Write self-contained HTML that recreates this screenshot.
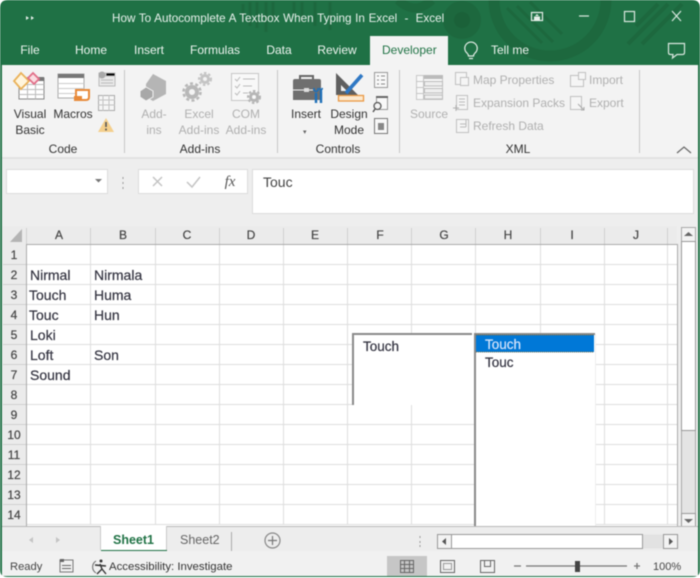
<!DOCTYPE html>
<html><head><meta charset="utf-8"><style>
html,body{margin:0;padding:0;background:#fff}
#w{position:relative;width:700px;height:578px;overflow:hidden;font-family:"Liberation Sans",sans-serif;filter:blur(.5px)}
.t{position:absolute;white-space:nowrap;line-height:16px}
.r{font-size:12px;color:#333}
.c{font-size:12px;color:#333;text-align:center;transform:translateX(-50%)}
.d{font-size:12px;color:#b0b0b0}
.g{font-size:12px;color:#333;transform:translateX(-50%)}
.m{font-size:12px;color:#eef5f0;transform:translateX(-50%)}
.cell{font-size:14px;color:#333340;-webkit-text-stroke:.2px #333340}
.hd{font-size:12px;color:#444;transform:translateX(-50%);-webkit-text-stroke:.2px #444}
svg{position:absolute;left:0;top:0}
</style></head><body><div id="w">
<svg width="700" height="578" viewBox="0 0 700 578">
<!-- window -->
<path d="M8 0H692Q700 0 700 8V570Q700 577 692 577H8Q0 577 0 570V8Q0 0 8 0Z" fill="#1f7145"/>
<!-- title decoration -->
<g fill="none" stroke="#1b6139" stroke-opacity=".55">
<path d="M243 4V22M250 2V26M257 2V28M266 2V32M273 2V20M294 2V14M302 2V22M315 2V26M330 2V30" stroke-width="3"/>
<circle cx="462" cy="20" r="13" stroke-width="12"/>
<circle cx="550" cy="0" r="56" stroke-width="11"/>
<path d="M507 8L542 43M517 6L553 42M530 2L562 34" stroke-width="3"/>
<path d="M628 44L668 4M642 44L682 4M636 26L658 4" stroke-width="4"/>
<path d="M398 0Q415 16 432 0" stroke-width="9"/>
</g>
<circle cx="462" cy="20" r="8" fill="#1b6139"/>
<!-- ribbon -->
<rect x="2" y="65" width="696" height="92" fill="#f3f3f3"/>
<!-- formula area -->
<rect x="2" y="157" width="696" height="69" fill="#eeeeee"/>
<rect x="2" y="157" width="696" height="2" fill="#e2e2e2"/>
<!-- Developer tab -->
<rect x="370" y="36" width="78" height="30" fill="#f3f3f3"/>
<!-- group separators -->
<path d="M124.500 70V153M277.500 70V153M399.500 70V153M639.500 70V153" stroke="#c6c6c6"/>
<!-- formula boxes -->
<rect x="6.500" y="169.500" width="101" height="24" fill="#fff" stroke="#dcdcdc"/>
<path d="M95 179H102L98.500 182.500Z" fill="#777"/>
<path d="M123 177v2M123 182v2M123 187v2" stroke="#999"/>
<rect x="138.500" y="169.500" width="109" height="24" fill="#fff" stroke="#dcdcdc"/>
<path d="M153 177L162 186M162 177L153 186" stroke="#c4c4c4" stroke-width="1.500"/>
<path d="M187 182L192 187L200 177" stroke="#c4c4c4" stroke-width="1.500" fill="none"/>
<rect x="252.500" y="169.500" width="441" height="44" fill="#fff" stroke="#dcdcdc"/>
<!-- sheet area -->
<rect x="2" y="226" width="675" height="300" fill="#fff"/>
<rect x="2" y="226" width="24" height="300" fill="#ebebeb"/>
<rect x="2" y="226" width="675" height="19" fill="#ebebeb"/>
<rect x="677" y="226" width="21" height="300" fill="#eeeeee"/>
<path d="M22 229V242H10Z" fill="#b4b4b4"/>
<!-- grid -->
<g stroke="#dedede">
<path d="M26.500 245V525M90.500 245V525M155.500 245V525M219.500 245V525M283.500 245V525M347.500 245V525M411.500 245V525M475.500 245V525M540.500 245V525M604.500 245V525M667.500 245V525"/>
<path d="M26 264.500H677M26 284.500H677M26 304.500H677M26 324.500H677M26 344.500H677M26 364.500H677M26 384.500H677M26 404.500H677M26 424.500H677M26 444.500H677M26 464.500H677M26 484.500H677M26 504.500H677M26 524.500H677"/>
</g>
<g stroke="#cfcfcf">
<path d="M26.500 228V245M90.500 228V245M155.500 228V245M219.500 228V245M283.500 228V245M347.500 228V245M411.500 228V245M475.500 228V245M540.500 228V245M604.500 228V245M667.500 228V245"/>
<path d="M3 264.500H26M3 284.500H26M3 304.500H26M3 324.500H26M3 344.500H26M3 364.500H26M3 384.500H26M3 404.500H26M3 424.500H26M3 444.500H26M3 464.500H26M3 484.500H26M3 504.500H26"/>
</g>
<path d="M26 244.500H677.500V526M26.500 245V526" stroke="#ababab" fill="none"/>
<!-- textbox -->
<rect x="353" y="334" width="121" height="71" fill="#fff"/>
<path d="M353 405V334H472" fill="none" stroke="#8a8a8a" stroke-width="2"/>
<!-- listbox -->
<rect x="475" y="334" width="120" height="192" fill="#fff"/>
<path d="M475 527V334H595" fill="none" stroke="#8a8a8a" stroke-width="2"/>
<path d="M595.500 334V526" stroke="#eeeeee"/>
<path d="M475 526.500H595" stroke="#999"/>
<rect x="476" y="335" width="118" height="17" fill="#0078d7"/>
<path d="M476 335H594M476 352H594" stroke="#6f6a45" stroke-dasharray="1 1"/>
<!-- v scrollbar -->
<rect x="681.500" y="227.500" width="14" height="300" fill="#e4e4e4" stroke="#a8a8a8"/>
<rect x="681.500" y="241.500" width="14" height="189" fill="#fff" stroke="#999"/>
<rect x="682" y="228" width="13" height="13" fill="#f3f3f3"/>
<path d="M684 236H693L688.500 232Z" fill="#666"/>
<rect x="681.500" y="513.500" width="14" height="14" fill="#f3f3f3" stroke="#999"/>
<path d="M684 519H693L688.500 523Z" fill="#666"/>
<!-- tabs bar -->
<rect x="2" y="526" width="696" height="25" fill="#ededed"/>
<path d="M2 526.500H101M167 526.500H698" stroke="#b8b8b8"/>
<rect x="101" y="526" width="66" height="25" fill="#fff"/>
<rect x="101" y="550" width="66" height="2" fill="#1f7145"/>
<path d="M100.500 526V550M166.500 526V550" stroke="#c8c8c8"/>
<path d="M231.500 532V551" stroke="#aaa"/>
<path d="M33 537L29 540L33 543ZM56 537L60 540L56 543Z" fill="#c4c4c4"/>
<circle cx="272.500" cy="540.500" r="7.500" fill="none" stroke="#888" stroke-width="1.200"/>
<path d="M268 540.500H277M272.500 536V545" stroke="#777" stroke-width="1.200"/>
<path d="M420 536v2M420 541v2M420 545v2" stroke="#999"/>
<!-- h scrollbar -->
<rect x="437.500" y="534.500" width="241" height="14" fill="#e2e2e2" stroke="none"/>
<rect x="437.500" y="534.500" width="14" height="14" fill="#f3f3f3" stroke="#999"/>
<path d="M446 538V545L442 541.500Z" fill="#555"/>
<rect x="451.500" y="534.500" width="191" height="14" fill="#fff" stroke="#999"/>
<rect x="663.500" y="534.500" width="14" height="14" fill="#f3f3f3" stroke="#999"/>
<path d="M669 538V545L673 541.500Z" fill="#555"/>
<!-- status -->
<rect x="2" y="551" width="696" height="25" fill="#f1f1f1"/>
<rect x="387" y="556" width="40" height="20" fill="#c6c6c6"/>
<g fill="none" stroke="#666">
<path d="M400.500 560.500H413.500V572.500H400.500ZM400.500 564.500H413.500M400.500 568.500H413.500M404.500 560.500V572.500M409.500 560.500V572.500"/>
<rect x="440.500" y="560.500" width="14" height="12"/>
<rect x="443.500" y="563.500" width="8" height="6" stroke="#999"/>
<path d="M480.500 560.500H494.500V572.500H480.500ZM484.500 560.500V566.500H490.500V560.500"/>
</g>
<path d="M514 566H521M526 566H627M634 566H640M637 563V569" stroke="#777" stroke-width="1.300"/>
<rect x="575" y="561" width="5" height="11" fill="#444"/>
<g fill="#666"><rect x="60" y="560" width="13" height="12" fill="none" stroke="#777"/><rect x="60" y="559" width="4" height="3"/><path d="M62 565h9v1h-9zM62 568h9v1h-9z"/></g>
<path d="M96 561A7 7 0 0 0 96 573" stroke="#666" fill="none"/>
<circle cx="101" cy="561" r="1.500" fill="#333"/>
<path d="M95 565L106 566M100 564L102 569L97 574M102 569L106 574" stroke="#333" stroke-width="1.400" fill="none"/>
<!-- window controls -->
<g fill="none" stroke="#dbe8e0" stroke-width="1.200">
<rect x="531.500" y="12.500" width="11" height="8" stroke="#e6efe9"/>
<path d="M534 16.500H540V20H534Z M537 14L539 16H535Z" fill="#e6efe9" stroke="none"/>
<path d="M579 16H589"/>
<rect x="624.500" y="11.500" width="10" height="10"/>
<path d="M672 11L681 21M681 11L672 21"/>
<path d="M668.500 43.500V52.500Q668.500 54.500 670.500 54.500H673L672.500 58L677 54.500H682.500Q684.500 54.500 684.500 52.500V43.500Z"/>
<path d="M467 53A6.200 6.200 0 1 1 475 53Q473.500 54.500 473.500 56H468.500Q468.500 54.500 467 53ZM469 58.500H473" stroke="#e6efe9"/>
</g>
<path d="M26 16L29 18L26 20ZM31 16L34 18L31 20Z" fill="#e6efe9"/>
<!-- Visual Basic icon -->
<rect x="19" y="78" width="25" height="21" fill="#fff" stroke="#888"/>
<rect x="27" y="77" width="17" height="4" fill="#777"/>
<path d="M19 84.500H44M19 89.500H44M19 94.500H44M27.500 81V99M35.500 81V99" stroke="#bbb"/>
<path d="M21 73L29 81L21 89L14 81Z" fill="#fff5dd" stroke="#eab25a" stroke-width="1.800"/>
<path d="M33 73L39 79L34 84L28 78Z" fill="#fbdde2" stroke="#e2708a" stroke-width="1.800"/>
<!-- Macros icon -->
<rect x="58" y="74" width="26" height="24" fill="#fff" stroke="#aaa"/>
<rect x="58" y="74" width="26" height="4" fill="#777"/>
<path d="M58 83.500H84M58 88.500H84M58 93.500H84" stroke="#ccc"/>
<path d="M76 90H89V97Q89 100 86 100H74Q77 100 76 97Z" fill="#fff" stroke="#e88a3a" stroke-width="2"/>
<path d="M74 96H82V100H74Z" fill="#e88a3a"/>
<!-- small code icons -->
<rect x="99" y="73" width="16" height="13" fill="#e9e9e9" stroke="#bbb"/>
<circle cx="102" cy="75" r="3.500" fill="#a9a9a9"/>
<path d="M106 73H115V76H106ZM101 80H113M101 83H113" stroke="#bbb"/>
<rect x="98.500" y="95.500" width="16" height="15" fill="#f6f6f6" stroke="#aaa"/>
<path d="M98 100H115M98 105H115M103 95V111M109 95V111" stroke="#c2c2c2"/>
<path d="M106 118L114 132H98Z" fill="#f4cf8c"/>
<path d="M106 122V127M106 128.500V130.500" stroke="#555" stroke-width="1.600"/>
<!-- Add-ins icons -->
<path d="M153 74L166 81V94L153 101L146 97V84Z" fill="#b5b5b5"/>
<path d="M146 87L153 91V97L146 101L140 97V91Z" fill="#a8a8a8" stroke="#f3f3f3"/>
<g fill="none" stroke="#b8b8b8">
<circle cx="192" cy="92" r="5" stroke-width="4"/>
<circle cx="192" cy="92" r="8.500" stroke-width="2.500" stroke-dasharray="3 2.400"/>
<circle cx="205" cy="79" r="3.500" stroke-width="3" stroke="#c4c4c4"/>
<circle cx="205" cy="79" r="6" stroke-width="2" stroke-dasharray="2.500 2" stroke="#c4c4c4"/>
</g>
<rect x="231.500" y="73.500" width="27" height="27" fill="#f8f8f8" stroke="#c6c6c6"/>
<path d="M235 79L237 81L240 77M235 86L237 88L240 84M235 93L237 95L240 91M243 79H255M243 86H252M243 93H248" stroke="#bbb" fill="none"/>
<circle cx="254" cy="97" r="3.500" fill="none" stroke="#b5b5b5" stroke-width="3"/>
<circle cx="254" cy="97" r="6" fill="none" stroke="#b5b5b5" stroke-width="2" stroke-dasharray="2.500 2"/>
<!-- Insert icon -->
<path d="M300 80V76H313V80" fill="none" stroke="#666" stroke-width="2"/>
<path d="M295 79Q293 79 293 81V100H321V81Q321 79 319 79Z" fill="#6f6f6f"/>
<path d="M293 90H313" stroke="#f3f3f3"/>
<rect x="304" y="88" width="5" height="4" fill="#ddd"/>
<path d="M316 93V103M321 91V103" stroke="#1e6fb8" stroke-width="2.400"/>
<path d="M314 88V90Q316 93 318 90V88M319.500 88L321 91L322.500 88" stroke="#1e6fb8" stroke-width="1.600" fill="none"/>
<!-- Design mode -->
<path d="M336 73L358 95H336ZM341 85V91H347Z" fill="#5f5f5f" fill-rule="evenodd"/>
<path d="M346 93L362 75" stroke="#2f78c4" stroke-width="3.600"/>
<rect x="338.500" y="95.500" width="25" height="5.500" fill="#fde9cf" stroke="#ea9a45" stroke-width="1.300"/>
<!-- small control icons -->
<rect x="374.500" y="72.500" width="13" height="15" fill="#f8f8f8" stroke="#999"/>
<path d="M377 76H379M377 80H379M377 84H379M381 76H385M381 80H385M381 84H385" stroke="#888"/>
<rect x="376.500" y="96.500" width="11" height="13" fill="#f8f8f8" stroke="#999"/>
<path d="M376 97H388" stroke="#666" stroke-width="2"/>
<circle cx="377.500" cy="106" r="3.500" fill="#f3f3f3" stroke="#555" stroke-width="1.300"/>
<path d="M375 109L373 112" stroke="#555" stroke-width="1.500"/>
<rect x="374.500" y="118.500" width="13" height="15" fill="#f8f8f8" stroke="#777"/>
<path d="M378 123H384V130H378" fill="#888"/>
<!-- XML -->
<rect x="416.500" y="75.500" width="26" height="24" fill="#f8f8f8" stroke="#c8c8c8"/>
<rect x="423" y="75" width="20" height="4" fill="#bbb"/>
<path d="M416 81.500H423M416 87.500H423M416 93.500H423M423.500 75V100" stroke="#c4c4c4"/>
<rect x="424.500" y="81.500" width="18" height="4.500" fill="#eee" stroke="#bbb"/>
<rect x="424.500" y="88.500" width="18" height="4.500" fill="#eee" stroke="#bbb"/>
<rect x="424.500" y="95" width="18" height="4" fill="#eee" stroke="#bbb"/>
<g fill="#f5f5f5" stroke="#c0c0c0">
<rect x="455.500" y="72.500" width="11" height="12"/><rect x="460.500" y="77.500" width="8" height="8"/>
<rect x="456.500" y="95.500" width="11" height="14"/>
<rect x="456.500" y="119.500" width="12" height="13"/>
<rect x="570.500" y="75.500" width="13" height="11"/><rect x="578.500" y="72.500" width="7" height="7"/>
<rect x="570.500" y="96.500" width="11" height="13"/>
</g>
<path d="M453 108H459M456 105V111" stroke="#b0b0b0"/>
<path d="M459 99H465M459 102H465M459 105H465M460 124H466M460 127H466M466 120V127" stroke="#bbb"/>
<path d="M578 104L584 110M584 107V110H581" stroke="#aaa" fill="none"/>
<!-- collapse -->
<path d="M677 153L684 147L691 153" fill="none" stroke="#666" stroke-width="1.200"/>
</svg>

<!-- title -->
<div class="t" style="left:112px;top:11px;font-size:11.700px;color:#e8f1ec;word-spacing:.4px">How To Autocomplete A Textbox When Typing In Excel &nbsp;-&nbsp; Excel</div>
<div class="t m" style="left:30px;top:42px">File</div>
<div class="t m" style="left:91px;top:42px">Home</div>
<div class="t m" style="left:149px;top:42px">Insert</div>
<div class="t m" style="left:215px;top:42px">Formulas</div>
<div class="t m" style="left:279px;top:42px">Data</div>
<div class="t m" style="left:337px;top:42px">Review</div>
<div class="t" style="left:382px;top:42px;font-size:12px;color:#217346">Developer</div>
<div class="t" style="left:491px;top:42px;font-size:12px;color:#eef5f0">Tell me</div>

<!-- ribbon labels -->
<div class="t c" style="left:30px;top:106px">Visual</div>
<div class="t c" style="left:30px;top:122px">Basic</div>
<div class="t c" style="left:73px;top:106px">Macros</div>
<div class="t g" style="left:63px;top:141px">Code</div>
<div class="t d c" style="left:154px;top:106px">Add-</div>
<div class="t d c" style="left:154px;top:122px">ins</div>
<div class="t d c" style="left:199px;top:106px">Excel</div>
<div class="t d c" style="left:199px;top:122px">Add-ins</div>
<div class="t d c" style="left:246px;top:106px">COM</div>
<div class="t d c" style="left:246px;top:122px">Add-ins</div>
<div class="t g" style="left:200px;top:141px">Add-ins</div>
<div class="t c" style="left:306px;top:106px">Insert</div>
<div class="t" style="left:303px;top:125px;font-size:7px;color:#666">&#9662;</div>
<div class="t c" style="left:349px;top:106px">Design</div>
<div class="t c" style="left:349px;top:122px">Mode</div>
<div class="t g" style="left:338px;top:141px">Controls</div>
<div class="t d c" style="left:429px;top:106px">Source</div>
<div class="t d" style="left:473px;top:72px">Map Properties</div>
<div class="t d" style="left:473px;top:95px">Expansion Packs</div>
<div class="t d" style="left:473px;top:118px">Refresh Data</div>
<div class="t d" style="left:589px;top:72px">Import</div>
<div class="t d" style="left:589px;top:95px">Export</div>
<div class="t g" style="left:518px;top:141px">XML</div>

<!-- formula -->
<div class="t" style="top:174px;font-family:'Liberation Serif',serif;font-style:italic;font-size:15px;color:#555;transform:translateX(-50%);left:230px">fx</div>
<div class="t" style="left:263px;top:174px;font-size:14px;color:#444">Touc</div>

<!-- column headers -->
<div class="t hd" style="left:59px;top:227px">A</div>
<div class="t hd" style="left:123px;top:227px">B</div>
<div class="t hd" style="left:187px;top:227px">C</div>
<div class="t hd" style="left:251px;top:227px">D</div>
<div class="t hd" style="left:315px;top:227px">E</div>
<div class="t hd" style="left:380px;top:227px">F</div>
<div class="t hd" style="left:444px;top:227px">G</div>
<div class="t hd" style="left:508px;top:227px">H</div>
<div class="t hd" style="left:572px;top:227px">I</div>
<div class="t hd" style="left:636px;top:227px">J</div>
<!-- row headers -->
<div class="t hd" style="left:14px;top:247px">1</div>
<div class="t hd" style="left:14px;top:267px">2</div>
<div class="t hd" style="left:14px;top:287px">3</div>
<div class="t hd" style="left:14px;top:307px">4</div>
<div class="t hd" style="left:14px;top:327px">5</div>
<div class="t hd" style="left:14px;top:347px">6</div>
<div class="t hd" style="left:14px;top:367px">7</div>
<div class="t hd" style="left:14px;top:387px">8</div>
<div class="t hd" style="left:14px;top:407px">9</div>
<div class="t hd" style="left:14px;top:427px">10</div>
<div class="t hd" style="left:14px;top:447px">11</div>
<div class="t hd" style="left:14px;top:467px">12</div>
<div class="t hd" style="left:14px;top:487px">13</div>
<div class="t hd" style="left:14px;top:507px">14</div>
<!-- cells -->
<div class="t cell" style="left:30px;top:267px">Nirmal</div>
<div class="t cell" style="left:94px;top:267px">Nirmala</div>
<div class="t cell" style="left:29px;top:287px">Touch</div>
<div class="t cell" style="left:94px;top:287px">Huma</div>
<div class="t cell" style="left:29px;top:307px">Touc</div>
<div class="t cell" style="left:94px;top:307px">Hun</div>
<div class="t cell" style="left:30px;top:327px">Loki</div>
<div class="t cell" style="left:30px;top:347px">Loft</div>
<div class="t cell" style="left:94px;top:347px">Son</div>
<div class="t cell" style="left:30px;top:367px">Sound</div>
<!-- controls -->
<div class="t cell" style="left:363px;top:339px;font-size:13.500px">Touch</div>
<div class="t cell" style="left:485px;top:337px;font-size:13.500px;color:#d5e4fb;-webkit-text-stroke:.2px #d5e4fb">Touch</div>
<div class="t cell" style="left:485px;top:355px;font-size:13.500px">Touc</div>
<!-- tabs -->
<div class="t" style="left:113px;top:532px;font-size:12.500px;font-weight:bold;color:#217346">Sheet1</div>
<div class="t" style="left:180px;top:532px;font-size:12.500px;color:#666">Sheet2</div>
<!-- status -->
<div class="t" style="left:10px;top:559px;font-size:11.200px;color:#444">Ready</div>
<div class="t" style="left:109px;top:559px;font-size:11.400px;color:#333">Accessibility: Investigate</div>
<div class="t" style="left:653px;top:559px;font-size:11px;color:#444">100%</div>
</div></body></html>
